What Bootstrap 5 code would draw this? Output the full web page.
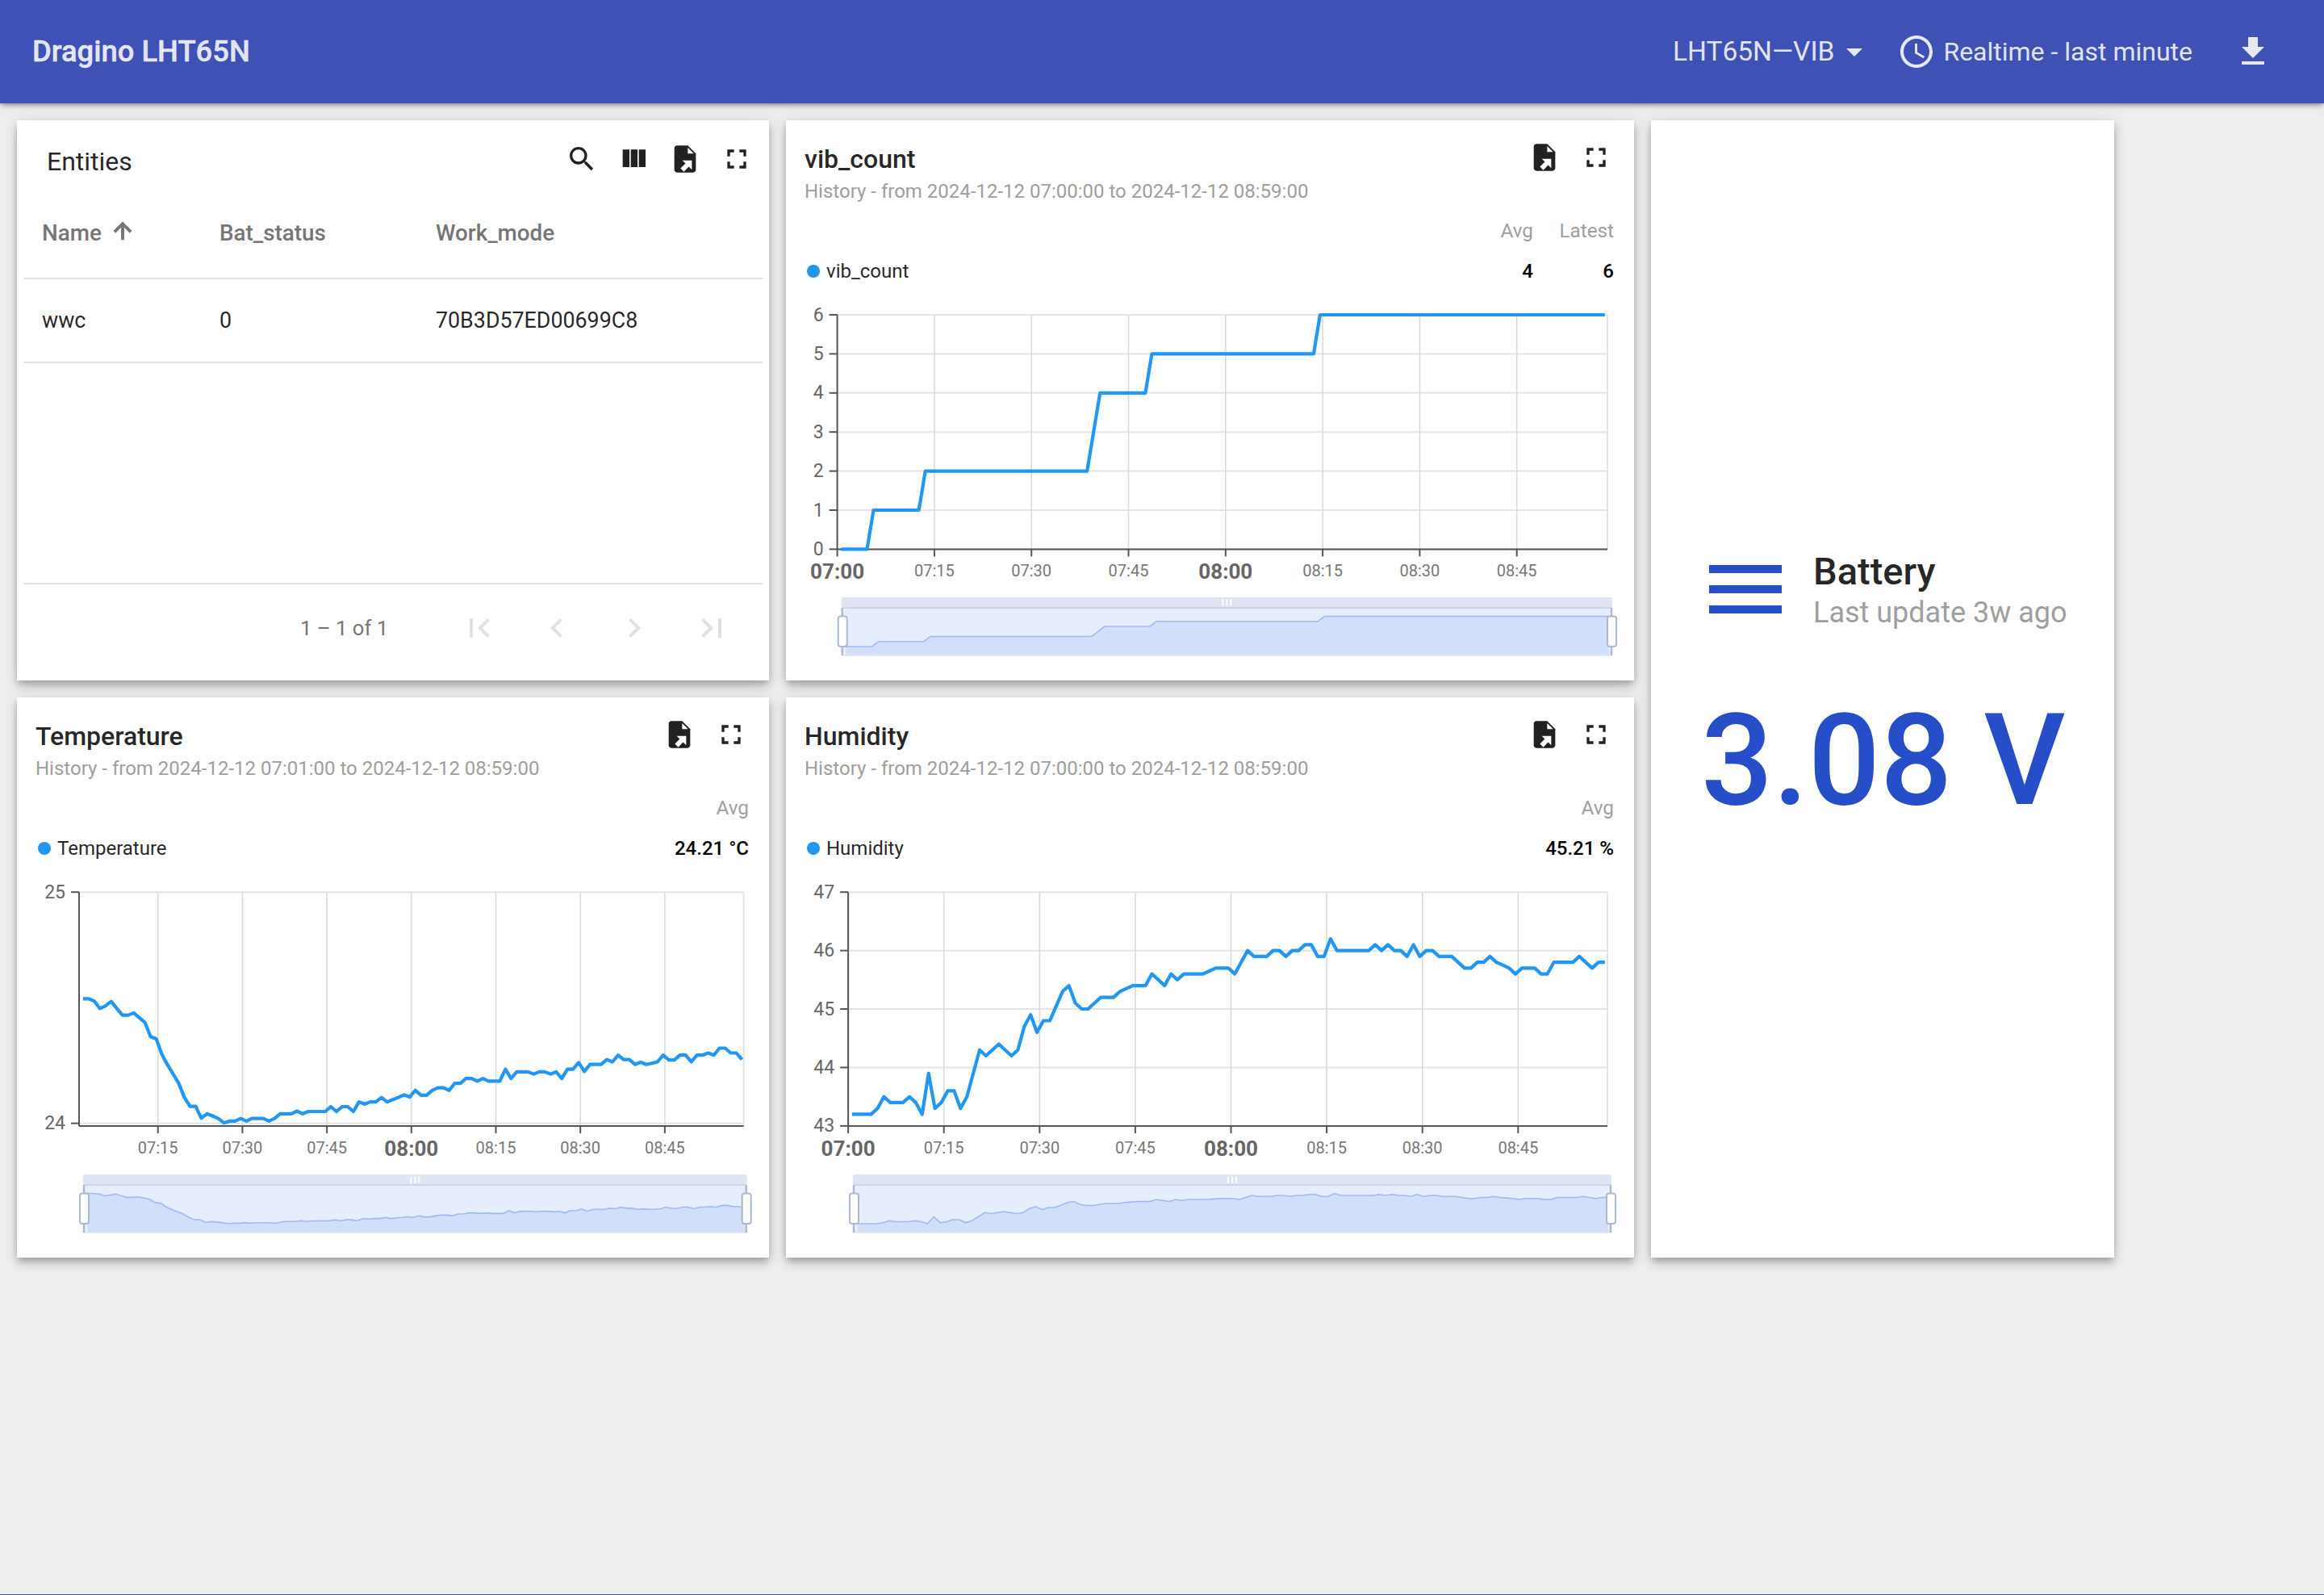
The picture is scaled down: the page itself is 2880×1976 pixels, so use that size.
<!DOCTYPE html>
<html lang="en">

<head>
  <meta charset="UTF-8" />
  <title>Dragino LHT65N</title>
  <meta name="viewport" content="width=device-width, initial-scale=1.0" />
  <link href="https://cdn.jsdelivr.net/npm/bootstrap@5.3.0/dist/css/bootstrap.min.css" rel="stylesheet" />
  <style>
    html, body { height: 100%; }
    body { font-family: Roboto, "Liberation Sans", sans-serif; background: #eeeeee; color: rgba(0, 0, 0, .87); border-bottom: 1px solid #3f51b5; }
    svg { display: block; flex: none; }
    .top-bar { height: 128px; background: #3f51b5; color: rgba(255, 255, 255, .87); padding: 0 64px 0 40px; box-shadow: 0 4px 8px -2px rgba(0, 0, 0, .3), 0 2px 4px rgba(0, 0, 0, .2); position: relative; z-index: 2; flex-wrap: nowrap; }
    .top-title { font-size: 36.4px; font-weight: 500; color: inherit; margin: 0; padding: 0; -webkit-text-stroke: .4px currentColor; }
    .top-select { font-size: 33.5px; color: inherit; margin-right: 43px; line-height: 1; }
    .top-select.dropdown-toggle::after { margin-left: 15px; vertical-align: 5px; }
    .top-range { font-size: 32px; gap: 9px; margin-right: 51px; }
    .top-bar svg { fill: currentColor; }
    .board { display: grid; grid-template-columns: 932px 1051px 574px; grid-template-rows: 694px 694px; gap: 21px; padding: 21px 0 0 21px; }
    .panel { box-shadow: 0 4px 8px -2px rgba(0, 0, 0, .2), 0 8px 10px rgba(0, 0, 0, .14), 0 2px 18px rgba(0, 0, 0, .12); }
    .panel-tall { grid-column: 3; grid-row: 1 / span 2; }
    .icon-row { gap: 24px; }
    .icon-row svg { fill: #212121; }
    .entity-head { height: 84px; padding: 28px 20px 0 37px; }
    .entity-title { font-size: 32px; line-height: 40px; margin-top: 3px; }
    .entity-table { margin: 0 8px; width: calc(100% - 16px); table-layout: fixed; font-size: 26.8px; }
    .entity-table th, .entity-table td { padding: 0 0 0 23px; vertical-align: middle; border-color: #e0e0e0; border-width: 0 0 2px; background: transparent; }
    .entity-table th { height: 112px; font-size: 27.8px; font-weight: 500; color: #757575; }
    .entity-table td { height: 104px; color: rgba(0, 0, 0, .87); }
    .entity-table th:nth-child(1) { width: 220px; }
    .entity-table th:nth-child(2) { width: 268px; }
    .entity-table th svg { display: inline-block; vertical-align: -4px; margin-left: 3px; margin-top: -8px; fill: #757575; stroke: #757575; stroke-width: .8; }
    .entity-foot { height: 121px; margin: auto 8px 0; padding-bottom: 11px; border-top: 2px solid #e0e0e0; font-size: 25.7px; color: #757575; }
    .entity-count { margin-left: 343px; width: 160px; }
    .page-btns { margin-left: 38px; gap: 48px; }
    .page-btns svg { fill: #e0e0e0; }
    .chart-head { padding: 28px 25px 0 23px; }
    .chart-title { font-size: 32px; font-weight: 500; line-height: 40px; }
    .chart-sub { font-size: 24px; line-height: 30px; margin-top: 5px; color: #9e9e9e; }
    .chart-actions { margin: -2px 2px 0 0; }
    .legend-head { height: 40px; margin: 16px 0 0; padding: 0 25px 0 23px; font-size: 24.3px; color: #9e9e9e; }
    .legend-row { height: 40px; margin: 8px 0 4px; padding: 0 25px 0 26px; font-size: 24px; }
    .legend-dot { width: 16px; height: 16px; border-radius: 50%; background: #2196f3; margin-right: 8px; }
    .legend-cell { width: 100px; text-align: right; }
    .legend-row .legend-cell { font-weight: 500; color: #000; }
    .legend-wide { width: 180px; }
    .batt-wrap { padding: 8px 0 0 72px; }
    .batt-title { font-size: 47px; font-weight: 500; line-height: 50px; }
    .batt-sub { font-size: 36px; line-height: 36px; margin-top: 8px; color: #9e9e9e; }
    .batt-head { gap: 39px; }
    .batt-bars { gap: 15px; width: 90px; }
    .batt-bars i { display: block; height: 10px; background: #254ec8; }
    .batt-value { font-size: 157px; font-weight: 500; line-height: 180px; color: #254ec8; margin: 75px 0 0 -10px; white-space: nowrap; }
    .ax-y { font-size: 23px; fill: #666; text-anchor: end; dominant-baseline: middle; }
    .ax-x { font-size: 20px; fill: #777; text-anchor: middle; dominant-baseline: middle; }
    .ax-x.major { font-size: 26px; font-weight: 700; fill: #666; }
  </style>
</head>

<body class="d-flex flex-column">
  <nav class="navbar top-bar">
    <span class="navbar-brand top-title">Dragino LHT65N</span>
    <div class="d-flex align-items-center ms-auto">
      <span class="dropdown-toggle top-select">LHT65N—VIB</span>
      <span class="d-flex align-items-center top-range">
        <svg width="48" height="48" viewBox="0 0 24 24"><path d="M11.99 2C6.47 2 2 6.48 2 12s4.47 10 9.99 10C17.52 22 22 17.52 22 12S17.52 2 11.99 2zM12 20c-4.42 0-8-3.58-8-8s3.58-8 8-8 8 3.58 8 8-3.58 8-8 8z" /><path d="M12.5 7H11v6l5.25 3.15.75-1.23-4.5-2.67z" /></svg>
        Realtime - last minute
      </span>
      <svg width="48" height="48" viewBox="0 0 24 24"><path d="M19 9h-4V3H9v6H5l7 7 7-7zM5 18v2h14v-2H5z" /></svg>
    </div>
  </nav>

  <main class="board flex-grow-1">
    <!-- entities table -->
    <div class="card rounded-0 border-0 panel">
      <div class="d-flex justify-content-between entity-head">
        <div class="entity-title">Entities</div>
        <div class="d-flex icon-row">
          <svg width="40" height="40" viewBox="0 0 24 24"><path d="M15.5 14h-.79l-.28-.27A6.471 6.471 0 0 0 16 9.5 6.5 6.5 0 1 0 9.5 16c1.61 0 3.09-.59 4.23-1.57l.27.28v.79l5 4.99L20.49 19l-4.99-5zm-6 0C7.01 14 5 11.99 5 9.5S7.01 5 9.5 5 14 7.01 14 9.5 11.99 14 9.5 14z" /></svg>
          <svg width="40" height="40" viewBox="0 0 24 24"><path d="M10 18h5V5h-5v13zm-6 0h5V5H4v13zM16 5v13h5V5h-5z" /></svg>
          <svg width="40" height="40" viewBox="0 0 24 24"><use href="#ic-export" /></svg>
          <svg width="40" height="40" viewBox="0 0 24 24"><use href="#ic-full" /></svg>
        </div>
      </div>
      <table class="table mb-0 entity-table">
        <thead>
          <tr>
            <th>Name <svg width="32" height="32" viewBox="0 0 24 24"><path d="M4 12l1.41 1.41L11 7.83V20h2V7.83l5.58 5.59L20 12l-8-8-8 8z" /></svg></th>
            <th>Bat_status</th>
            <th>Work_mode</th>
          </tr>
        </thead>
        <tbody>
          <tr>
            <td>wwc</td>
            <td>0</td>
            <td>70B3D57ED00699C8</td>
          </tr>
        </tbody>
      </table>
      <div class="d-flex align-items-center entity-foot">
        <div class="entity-count">1 – 1 of 1</div>
        <div class="d-flex page-btns">
          <svg width="48" height="48" viewBox="0 0 24 24"><path d="M18.41 16.59L13.82 12l4.59-4.59L17 6l-6 6 6 6zM6 6h2v12H6z" /></svg>
          <svg width="48" height="48" viewBox="0 0 24 24"><path d="M15.41 7.41L14 6l-6 6 6 6 1.41-1.41L10.83 12z" /></svg>
          <svg width="48" height="48" viewBox="0 0 24 24"><path d="M10 6L8.59 7.41 13.17 12l-4.58 4.59L10 18l6-6z" /></svg>
          <svg width="48" height="48" viewBox="0 0 24 24"><path d="M5.59 7.41L10.18 12l-4.59 4.59L7 18l6-6-6-6zM16 6h2v12h-2z" /></svg>
        </div>
      </div>
    </div>

    <!-- vib_count -->
    <div class="card rounded-0 border-0 panel">
      <div class="d-flex justify-content-between chart-head">
        <div>
          <div class="chart-title">vib_count</div>
          <div class="chart-sub">History - from 2024-12-12 07:00:00 to 2024-12-12 08:59:00</div>
        </div>
        <div class="d-flex icon-row chart-actions">
          <svg width="40" height="40" viewBox="0 0 24 24"><use href="#ic-export" /></svg>
          <svg width="40" height="40" viewBox="0 0 24 24"><use href="#ic-full" /></svg>
        </div>
      </div>
      <div class="d-flex justify-content-end legend-head">
        <div class="legend-cell">Avg</div>
        <div class="legend-cell">Latest</div>
      </div>
      <div class="d-flex align-items-center legend-row">
        <span class="legend-dot"></span>vib_count
        <div class="legend-cell ms-auto">4</div>
        <div class="legend-cell">6</div>
      </div>
      <svg id="chartVib" width="1051" height="480"></svg>
    </div>

    <!-- battery -->
    <div class="card rounded-0 border-0 panel panel-tall justify-content-center batt-wrap">
      <div class="d-flex align-items-center batt-head">
        <div class="d-flex flex-column batt-bars"><i></i><i></i><i></i></div>
        <div>
          <div class="batt-title">Battery</div>
          <div class="batt-sub">Last update 3w ago</div>
        </div>
      </div>
      <div class="batt-value">3.08 V</div>
    </div>

    <!-- temperature -->
    <div class="card rounded-0 border-0 panel">
      <div class="d-flex justify-content-between chart-head">
        <div>
          <div class="chart-title">Temperature</div>
          <div class="chart-sub">History - from 2024-12-12 07:01:00 to 2024-12-12 08:59:00</div>
        </div>
        <div class="d-flex icon-row chart-actions">
          <svg width="40" height="40" viewBox="0 0 24 24"><use href="#ic-export" /></svg>
          <svg width="40" height="40" viewBox="0 0 24 24"><use href="#ic-full" /></svg>
        </div>
      </div>
      <div class="d-flex justify-content-end legend-head">
        <div class="legend-cell">Avg</div>
      </div>
      <div class="d-flex align-items-center legend-row">
        <span class="legend-dot"></span>Temperature
        <div class="legend-cell legend-wide ms-auto">24.21 °C</div>
      </div>
      <svg id="chartTemp" width="932" height="480"></svg>
    </div>

    <!-- humidity -->
    <div class="card rounded-0 border-0 panel">
      <div class="d-flex justify-content-between chart-head">
        <div>
          <div class="chart-title">Humidity</div>
          <div class="chart-sub">History - from 2024-12-12 07:00:00 to 2024-12-12 08:59:00</div>
        </div>
        <div class="d-flex icon-row chart-actions">
          <svg width="40" height="40" viewBox="0 0 24 24"><use href="#ic-export" /></svg>
          <svg width="40" height="40" viewBox="0 0 24 24"><use href="#ic-full" /></svg>
        </div>
      </div>
      <div class="d-flex justify-content-end legend-head">
        <div class="legend-cell">Avg</div>
      </div>
      <div class="d-flex align-items-center legend-row">
        <span class="legend-dot"></span>Humidity
        <div class="legend-cell legend-wide ms-auto">45.21 %</div>
      </div>
      <svg id="chartHum" width="1051" height="480"></svg>
    </div>
  </main>

  <!-- shared icons -->
  <svg width="0" height="0" class="position-absolute">
    <defs>
      <g id="ic-export">
        <path d="M6 2c-1.1 0-2 .9-2 2v16c0 1.1.9 2 2 2h12c1.1 0 2-.9 2-2V8l-6-6H6z" />
        <path fill="#fff" d="M14 3.6 18.4 8H14zM10 13h7v7l-2.3-2.3-3.6 3.7-2.5-2.5 3.7-3.6z" />
      </g>
      <path id="ic-full" d="M7 14H5v5h5v-2H7v-3zm-2-4h2V7h3V5H5v5zm12 7h-3v2h5v-5h-2v3zM14 5v2h3v3h2V5h-5z" />
    </defs>
  </svg>

  <script>
    // readings per minute, first one at 07:01
    const humidity = [43.2, 43.2, 43.2, 43.2, 43.3, 43.5, 43.4, 43.4, 43.4, 43.5, 43.4, 43.2, 43.9, 43.3, 43.4, 43.6, 43.6, 43.3, 43.5, 43.9,
      44.3, 44.2, 44.3, 44.4, 44.3, 44.2, 44.3, 44.7, 44.9, 44.6, 44.8, 44.8, 45.05, 45.3, 45.4, 45.1, 45, 45, 45.1, 45.2,
      45.2, 45.2, 45.3, 45.35, 45.4, 45.4, 45.4, 45.6, 45.5, 45.4, 45.6, 45.5, 45.6, 45.6, 45.6, 45.6, 45.65, 45.7, 45.7, 45.7,
      45.6, 45.8, 46, 45.9, 45.9, 45.9, 46, 46, 45.9, 46, 46, 46.1, 46.1, 45.9, 45.9, 46.2, 46, 46, 46, 46,
      46, 46, 46.1, 46, 46.1, 46, 46, 45.9, 46.1, 45.9, 46, 46, 45.9, 45.9, 45.9, 45.8, 45.7, 45.7, 45.8, 45.8,
      45.9, 45.8, 45.75, 45.7, 45.6, 45.7, 45.7, 45.7, 45.6, 45.6, 45.8, 45.8, 45.8, 45.8, 45.9, 45.8, 45.7, 45.8, 45.8];

    // traced off the plot, 624 units per degree above 24
    const temperature = [822, 822, 828, 848, 841, 829, 848, 866, 866, 860, 873, 886, 924, 930, 972, 1000, 1025, 1050, 1088, 1112,
      1112, 1144, 1132, 1138, 1145, 1157, 1152, 1152, 1145, 1152, 1145, 1145, 1145, 1152, 1145, 1132, 1132, 1132, 1125, 1132,
      1126, 1126, 1126, 1126, 1113, 1126, 1113, 1113, 1126, 1100, 1106, 1100, 1100, 1088, 1100, 1094, 1088, 1081, 1087, 1069,
      1082, 1082, 1069, 1062, 1062, 1069, 1050, 1050, 1037, 1037, 1044, 1037, 1044, 1044, 1044, 1012, 1037, 1019, 1019, 1019,
      1025, 1019, 1019, 1025, 1019, 1037, 1012, 1012, 994, 1018, 999, 999, 999, 986, 992, 974, 986, 986, 999, 993,
      999, 996, 992, 974, 987, 987, 974, 974, 992, 974, 974, 968, 974, 955, 955, 968, 968, 986].map(y => 24 + (1158 - y) / 624);

    const vibPoints = [[0.6, 0], [4.6, 0], [5.6, 1], [12.6, 1], [13.6, 2], [38.6, 2], [40.6, 4], [47.6, 4], [48.6, 5], [73.6, 5], [74.6, 6], [118.6, 6]];

    function drawChart(id, c) {
      const sx = m => c.x0 + (m - c.from) / (119 - c.from) * (c.x1 - c.x0);
      const sy = v => c.yBottom - (v - c.yMin) / (c.yMax - c.yMin) * (c.yBottom - c.yTop);
      let out = '';

      // grid
      c.yTicks.forEach(v => {
        const y = sy(v);
        out += `<line x1="${c.x0}" x2="${c.x1}" y1="${y}" y2="${y}" stroke="#e4e4e4" stroke-width="2"/>`;
        out += `<line x1="${c.x0 - 10}" x2="${c.x0}" y1="${y}" y2="${y}" stroke="#555" stroke-width="2"/>`;
        out += `<text class="ax-y" x="${c.x0 - 17}" y="${y + 1.5}">${v}</text>`;
      });
      out += `<line x1="${c.x1}" x2="${c.x1}" y1="${c.top}" y2="${c.bottom}" stroke="#e4e4e4" stroke-width="2"/>`;
      c.xTicks.forEach(m => {
        const x = sx(m);
        const h = String(7 + Math.floor(m / 60)).padStart(2, '0');
        const min = String(m % 60).padStart(2, '0');
        if (m !== c.from) out += `<line x1="${x}" x2="${x}" y1="${c.top}" y2="${c.bottom}" stroke="#dadada" stroke-width="1.6"/>`;
        out += `<line x1="${x}" x2="${x}" y1="${c.bottom}" y2="${c.bottom + 9}" stroke="#555" stroke-width="2"/>`;
        out += `<text class="ax-x ${m % 60 === 0 ? 'major' : ''}" x="${x}" y="${m % 60 === 0 ? 350 : 349}">${h}:${min}</text>`;
      });
      out += `<line x1="${c.x0}" x2="${c.x0}" y1="${c.top}" y2="${c.bottom}" stroke="#555" stroke-width="2"/>`;
      out += `<line x1="${c.x0}" x2="${c.x1}" y1="${c.bottom}" y2="${c.bottom}" stroke="#555" stroke-width="2"/>`;

      // series
      const line = c.points.map(p => sx(p[0]).toFixed(1) + ',' + sy(p[1]).toFixed(1)).join(' ');
      out += `<polyline points="${line}" fill="none" stroke="#2196f3" stroke-width="4.2" stroke-linejoin="round"/>`;

      // zoom slider
      const vals = c.points.map(p => p[1]);
      const lo = Math.min(...vals), hi = Math.max(...vals);
      const zx = m => c.zx0 + (m - c.from) / (119 - c.from) * (c.zx1 - c.zx0);
      const zy = v => 441 - (v - lo) / (hi - lo) * 37.5;
      const mini = c.points.map(p => zx(p[0]).toFixed(1) + ',' + zy(p[1]).toFixed(1));
      const last = c.points[c.points.length - 1][0];
      out += `<rect x="${c.zx0 - 1}" y="380" width="${c.zx1 - c.zx0 + 2}" height="13" rx="2" fill="#dfe4f2"/>`;
      out += `<rect x="${c.zx0}" y="393" width="${c.zx1 - c.zx0}" height="59" fill="#e6edfd"/>`;
      out += `<polygon points="${zx(c.points[0][0])},452 ${mini.join(' ')} ${zx(last)},452" fill="#d2dffb" stroke="none"/>`;
      out += `<polyline points="${mini.join(' ')}" fill="none" stroke="#9fb9f3" stroke-width="1.6"/>`;
      out += `<line x1="${c.zx0}" x2="${c.zx1}" y1="393" y2="393" stroke="#cdd5e8" stroke-width="2"/>`;
      out += `<line x1="${c.zx0}" x2="${c.zx1}" y1="452" y2="452" stroke="#dbe3f5" stroke-width="1.5"/>`;
      const mid = (c.zx0 + c.zx1) / 2;
      [-5, 0, 5].forEach(d => { out += `<rect x="${mid + d - 1}" y="382.5" width="2" height="8" fill="#fff"/>`; });
      [c.zx0, c.zx1].forEach(x => {
        out += `<line x1="${x}" x2="${x}" y1="393" y2="452" stroke="#acb8d1" stroke-width="2.4"/>`;
        out += `<rect x="${x - 5}" y="403.5" width="11" height="37.5" rx="3" fill="#fff" stroke="#acb8d1" stroke-width="2"/>`;
      });

      document.getElementById(id).innerHTML = out;
    }

    drawChart('chartVib', {
      from: 0, x0: 63.6, x1: 1018, yTop: 30, yBottom: 320.4, top: 30, bottom: 320.4, yMin: 0, yMax: 6,
      yTicks: [0, 1, 2, 3, 4, 5, 6], xTicks: [0, 15, 30, 45, 60, 75, 90, 105],
      zx0: 69.7, zx1: 1023, points: vibPoints
    });
    drawChart('chartTemp', {
      from: 1, x0: 77, x1: 900.6, yTop: 30.2, yBottom: 316.7, top: 30.2, bottom: 319.9, yMin: 24, yMax: 25,
      yTicks: [24, 25], xTicks: [15, 30, 45, 60, 75, 90, 105],
      zx0: 83, zx1: 903.7, points: temperature.map((v, i) => [i + 1.7, v])
    });
    drawChart('chartHum', {
      from: 0, x0: 77.1, x1: 1018, yTop: 30.2, yBottom: 319.9, top: 30.2, bottom: 319.9, yMin: 43, yMax: 47,
      yTicks: [43, 44, 45, 46, 47], xTicks: [0, 15, 30, 45, 60, 75, 90, 105],
      zx0: 84, zx1: 1022, points: humidity.map((v, i) => [i + 0.6, v])
    });
  </script>
  <script src="https://cdn.jsdelivr.net/npm/bootstrap@5.3.0/dist/js/bootstrap.bundle.min.js"></script>
</body>

</html>
